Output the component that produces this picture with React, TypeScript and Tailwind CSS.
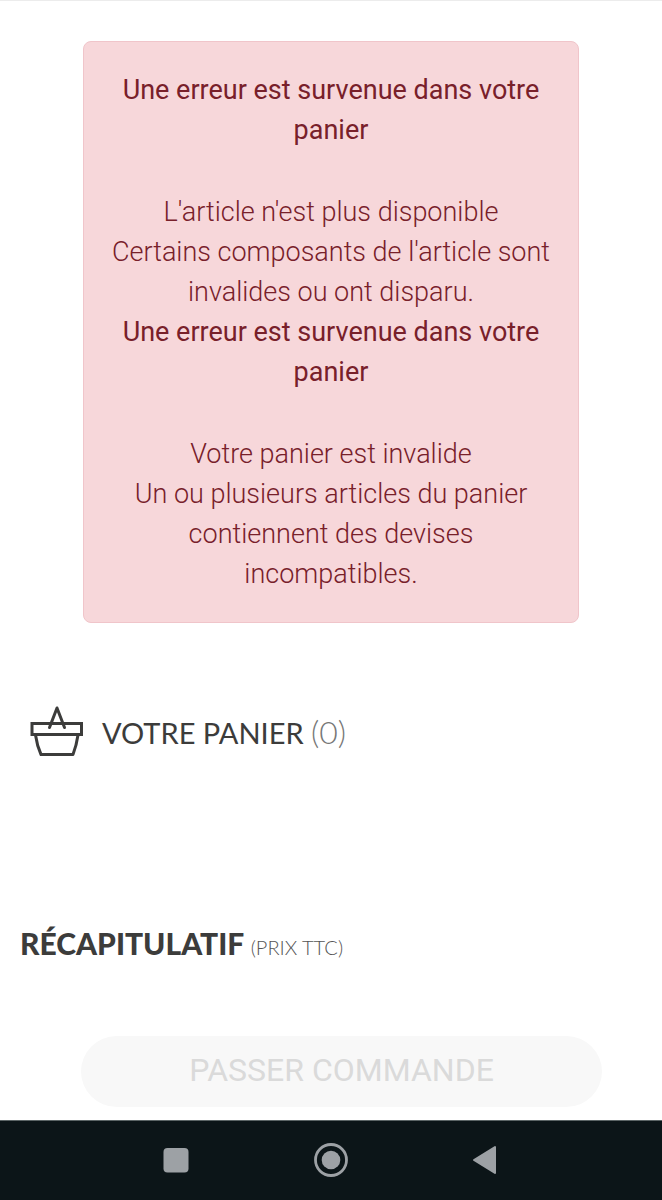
import React from "react";

interface CartError {
  title: string;
  lines: string[];
}

const errors: CartError[] = [
  {
    title: "Une erreur est survenue dans votre panier",
    lines: [
      "L'article n'est plus disponible",
      "Certains composants de l'article sont invalides ou ont disparu.",
    ],
  },
  {
    title: "Une erreur est survenue dans votre panier",
    lines: [
      "Votre panier est invalide",
      "Un ou plusieurs articles du panier contiennent des devises incompatibles.",
    ],
  },
];

const BasketIcon: React.FC = () => (
  <svg
    viewBox="0 0 54 50"
    className="w-[54px] h-[50px] shrink-0"
    fill="none"
    stroke="#3c3c3b"
    strokeWidth="3"
    strokeLinejoin="round"
    strokeLinecap="round"
    aria-hidden="true"
  >
    <path d="M2 17.5H51.5V28.5H2Z" strokeLinejoin="miter" />
    <path d="M5.5 29C6.5 36 8 42 11 48.5H43C45.5 42 47 36 48 29" />
    <path d="M19.5 21.5L27 2L34.5 21.5" />
  </svg>
);

const ErrorAlert: React.FC = () => (
  <div
    role="alert"
    className="w-3/4 mx-auto mt-10 px-7 py-7 rounded-lg border border-[#f0c5ca] bg-[#f7d7da] text-center text-[27px] leading-[40px] text-[#78202a]"
  >
    {errors.map((error, i) => (
      <div key={i}>
        <h2 className="font-normal">{error.title}</h2>
        <div className="mt-[42px] font-light">
          {error.lines.map((line) => (
            <p key={line}>{line}</p>
          ))}
        </div>
      </div>
    ))}
  </div>
);

const NavBar: React.FC = () => (
  <nav className="mt-auto h-20 shrink-0 flex items-center justify-around px-[99px] border-t border-[#5c6566] bg-[#0c1518] text-[#9da1a5]">
    <button type="button" aria-label="Applications récentes">
      <svg viewBox="0 0 36 36" className="w-9 h-9" fill="currentColor">
        <rect x="5.5" y="5" width="25" height="24.5" rx="4" />
      </svg>
    </button>
    <button type="button" aria-label="Accueil">
      <svg viewBox="0 0 36 36" className="w-9 h-9" fill="currentColor">
        <circle cx="18" cy="17" r="15.5" fill="none" stroke="currentColor" strokeWidth="2.8" />
        <circle cx="18" cy="17" r="9.3" />
      </svg>
    </button>
    <button type="button" aria-label="Retour">
      <svg viewBox="0 0 36 36" className="w-9 h-9" fill="currentColor">
        <path
          d="M6 17L27 4V30Z"
          stroke="currentColor"
          strokeWidth="2"
          strokeLinejoin="round"
        />
      </svg>
    </button>
  </nav>
);

const App: React.FC = () => {
  return (
    <div className="min-h-screen flex flex-col border-t border-[#ececec] bg-white font-['Roboto',sans-serif]">
      <main>
        <ErrorAlert />

        <h1 className="mt-20 pl-[30px] flex items-center gap-[18px] font-['Lato',sans-serif] text-[29px] leading-[50px] text-[#3c3c3b]">
          <BasketIcon />
          <span className="pt-1">
            VOTRE PANIER{" "}
            <span className="text-[32px] font-light text-[#777777]">(0)</span>
          </span>
        </h1>

        <h2 className="mt-40 pl-5 font-['Lato',sans-serif] text-[30px] leading-[50px] font-black text-[#3c3c3b]">
          RÉCAPITULATIF{" "}
          <span className="text-[20px] font-light text-[#555555]">
            (PRIX TTC)
          </span>
        </h2>

        <div className="mt-16 pl-[81px] pr-[60px]">
          <button
            type="button"
            disabled
            className="w-full h-[71px] pb-1 rounded-full bg-[#f8f8f8] text-[32px] text-[#dadada]"
          >
            PASSER COMMANDE
          </button>
        </div>
      </main>
      <NavBar />
    </div>
  );
};

export default App;
